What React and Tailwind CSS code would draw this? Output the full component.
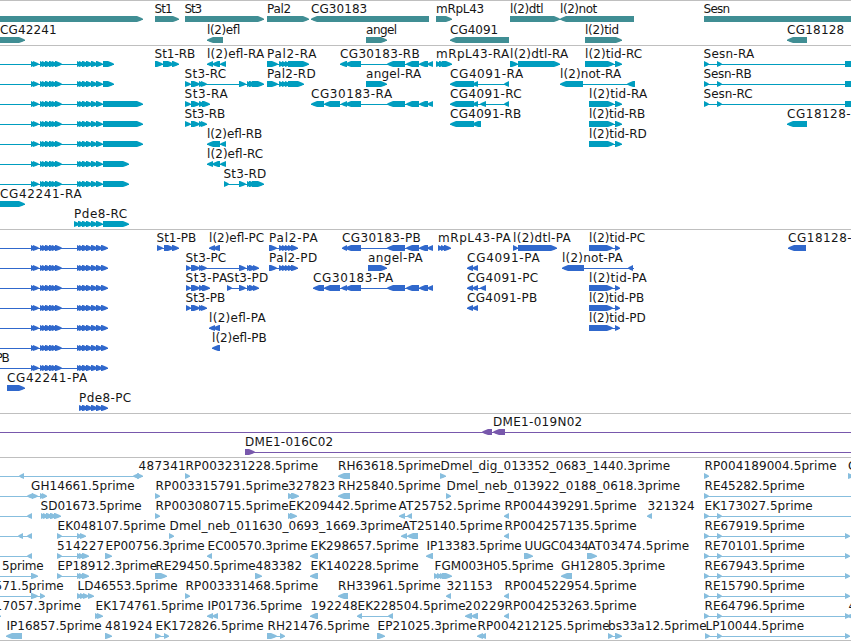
import React from "react";

/*
 * A feature is [row, label, labelStart, labelEnd, exons, lineStart?, lineEnd?].
 * Exons are written as "<a,b" or ">a,b", the sign giving the strand.
 */
const cluster = ">31,36 >33,39 >40,45 >42,48 >45,52 >49,56 >52,58 >55,62";
const pde = ">77,82 >79,85 >82,89 >86,93 >91,98 >96,103";
const pdeLong = (end) => `${cluster} ${pde} ${end > 110 ? ">103" : ">101"},${end}`;

const genes = [
  [0, "", 0, 0, ">-20,143"],
  [0, "St1", 155, 172, ">155,179"],
  [0, "St3", 185, 201.5, ">185,264"],
  [0, "Pal2", 267.5, 290.5, ">267,309"],
  [0, "CG30183", 311.5, 366.5, "<311,429"],
  [0, "mRpL43", 436.5, 483.5, ">436,452"],
  [0, "l(2)dtl", 510.5, 543, ">510,560"],
  [0, "l(2)not", 560.5, 596.5, "<560,634"],
  [0, "Sesn", 704, 729.5, ">704,880"],
  [1, "CG42241", 0.5, 56, ">-20,25"],
  [1, "l(2)efl", 207.5, 239.5, "<207,223"],
  [1, "angel", 366.5, 396.5, ">366,387"],
  [1, "CG4091", 450.5, 497.5, "<450,509"],
  [1, "l(2)tid", 585.5, 618.5, ">585,622"],
  [1, "CG18128", 787.5, 843.5, "<787,807"],
];

const cg30183Tail = "<387,405 <406,419 <419,428 <427,433";

const transcripts = [
  ...[114, 114, 143, 143, 143, 129, 129].map((end, i) => [i, "", 0, 0, pdeLong(end), 0]),
  [0, "St1-RB", 155, 194.5, ">155,163 >163,174 >172,179"],
  [0, "l(2)efl-RA", 207.5, 263.5, "<207,213 <212,220 <220,226"],
  [0, "Pal2-RA", 267.5, 315.7, ">267,278 >279,285 >282,288 >285,291 >288,309"],
  [0, "CG30183-RB", 340.5, 419, `<340,347 <345,361 ${cg30183Tail}`],
  [0, "mRpL43-RA", 436.5, 508.5, ">436,442 >439,446 >442,452"],
  [0, "l(2)dtl-RA", 510.5, 567.5, ">510,518 >518,560"],
  [0, "l(2)tid-RC", 585.5, 641.5, ">585,614 >615,622"],
  [0, "Sesn-RA", 704, 753.5, ">704,709 >717,722 >845,880"],
  [1, "St3-RC", 185, 225.5, ">185,191 >191,200 >199,204 >201,207 >239,246 >247,252 >249,256 >252,264"],
  [1, "Pal2-RD", 267.5, 315, ">267,278 >279,285 >282,288 >285,291 >288,304"],
  [1, "angel-RA", 366.5, 420.5, ">366,387"],
  [1, "CG4091-RA", 450.5, 522.5, "<450,474 <472,478 <504,509"],
  [1, "l(2)not-RA", 560.5, 620.5, "<560,583 <627,635"],
  [1, "Sesn-RB", 704, 751, ">704,709 >717,722 >845,880"],
  [2, "St3-RA", 185, 227, ">185,191 >191,200 >199,205 >202,210"],
  [2, "CG30183-RA", 311.5, 391.5, `<311,324 <324,340 <341,347 <345,361 ${cg30183Tail}`],
  [2, "CG4091-RC", 450.5, 521, "<450,474 <472,478 <480,486 <504,509"],
  [2, "l(2)tid-RA", 589.5, 646.5, ">589,614 >615,622"],
  [2, "Sesn-RC", 704, 752, ">704,709 >717,722 >845,880"],
  [3, "St3-RB", 185, 224.5, ">185,191 >191,200 >199,204 >201,207"],
  [3, "CG4091-RB", 450.5, 520.5, "<450,474 <472,481"],
  [3, "l(2)tid-RB", 589.5, 644.5, ">589,614 >615,622"],
  [3, "CG18128-", 787.5, 850, "<787,807"],
  [4, "l(2)efl-RB", 207.5, 261.5, "<207,220 <220,226"],
  [4, "l(2)tid-RD", 589.5, 646, ">589,614 >615,622"],
  [5, "l(2)efl-RC", 207.5, 262.5, "<207,213 <212,220 <220,226"],
  [6, "St3-RD", 224, 265.5, ">224,229 >239,246 >247,252 >249,256 >252,264"],
  [7, "CG42241-RA", 0.5, 81, ">-20,25"],
  [8, "Pde8-RC", 74.5, 126.5, ">74,80 >78,85 >82,89 >86,93 >91,98 >96,103 >103,129"],
];

const proteins = [
  ...[0, 1, 2, 3, 4, 5, 6].map((i) => [i, "", 0, 0, pdeLong(108), 0]),
  [0, "St1-PB", 157, 195.5, ">157,163 >164,174 >172,179"],
  [0, "l(2)efl-PC", 209.5, 263.5, "<209,215 <213,220"],
  [0, "Pal2-PA", 269.5, 317, ">269,277 >279,285 >282,288 >285,291 >288,294 >291,298"],
  [0, "CG30183-PB", 342.5, 420, `<342,347 <345,361 ${cg30183Tail}`],
  [0, "mRpL43-PA", 438.5, 510, ">438,443 >441,447 >444,451"],
  [0, "l(2)dtl-PA", 513.5, 570, ">513,518 >518,557"],
  [0, "l(2)tid-PC", 589.5, 644.5, ">589,613 >615,620"],
  [0, "CG18128-", 788.5, 851, "<788,806"],
  [1, "St3-PC", 186, 225.5, ">186,191 >191,200 >199,204 >201,207 >239,246 >247,252 >249,256 >253,259"],
  [1, "Pal2-PD", 269.5, 316.5, ">269,277 >279,285 >282,288 >285,291 >288,294 >291,298"],
  [1, "angel-PA", 368.5, 422, ">368,387"],
  [1, "CG4091-PA", 467.5, 539, "<467,473 <472,478"],
  [1, "l(2)not-PA", 562.5, 622, "<562,584 <628,633", 562, 634],
  [2, "St3-PA", 186, 226.5, ">186,191 >191,200 >199,205 >202,210"],
  [2, "St3-PD", 227, 267.5, ">227,232 >239,246 >247,252 >249,256 >253,259"],
  [2, "CG30183-PA", 313.5, 392.5, `<313,324 <324,340 <341,347 <345,361 ${cg30183Tail}`],
  [2, "CG4091-PC", 467.5, 537.5, "<467,473 <472,478 <480,486"],
  [2, "l(2)tid-PA", 589.5, 646, ">589,613 >615,620"],
  [3, "St3-PB", 186, 224.5, ">186,191 >191,200 >199,204 >201,207"],
  [3, "CG4091-PB", 467.5, 536.5, "<467,473 <472,478"],
  [3, "l(2)tid-PB", 589.5, 643.5, ">589,613 >615,620"],
  [4, "l(2)efl-PA", 209.5, 265, "<209,215 <213,220"],
  [4, "l(2)tid-PD", 589.5, 645, ">589,613 >615,620"],
  [5, "l(2)efl-PB", 212.5, 266, "<212,220"],
  [6, "PB", -4, 9, ""],
  [7, "CG42241-PA", 7.5, 86.5, ">7,25"],
  [8, "Pde8-PC", 79.5, 130.5, ">79,85 >82,89 >86,93 >91,98 >96,103 >101,108"],
];

const clones = [
  [0, "DME1-019N02", 493.5, 581.5, "<482,492 <493,505", 0, 851],
  [1, "DME1-016C02", 245.5, 332.5, ">245,255", 245, 851],
];

const ests = [
  [0, "", 0, 0, "<19,24 <133,139 >137,143", 0],
  [0, "487341", 139, 185, ""],
  [0, "RP003231228.5prime", 186, 317.5, ">185,190"],
  [0, "RH63618.5prime", 338.5, 440, "<338,350"],
  [0, "Dmel_dig_013352_0683_1440.3prime", 441, 669.5, ">440,446"],
  [0, "RP004189004.5prime", 705, 836, ">704,709"],
  [0, "C", 848.5, 855.5, ">848,854"],
  [1, "", 0, 0, "<27,33 >32,38 >40,45 >42,47", 0],
  [1, "GH14661.5prime", 31.5, 134, ""],
  [1, "RP003315791.5prime", 156, 288, ">155,160"],
  [1, "327823", 288.5, 334.5, ">288,294 >291,299"],
  [1, "RH25840.5prime", 338.5, 440, "<338,350"],
  [1, "Dmel_neb_013922_0188_0618.3prime", 447, 679.5, ">446,451"],
  [1, "RE45282.5prime", 705, 804, ">704,709", 704, 851],
  [2, "", 0, 0, "<27,32", 0],
  [2, "SD01673.5prime", 41, 141, ">41,46 >43,49 >46,53 >50,57 >54,61"],
  [2, "RP003080715.5prime", 156, 288, ">155,160"],
  [2, "EK209442.5prime", 289, 396, ">288,293 >290,297"],
  [2, "AT25752.5prime", 399, 500, "<399,405 <407,412"],
  [2, "RP004439291.5prime", 505, 636, "<504,509"],
  [2, "321324", 648, 694, "<647,652"],
  [2, "EK173027.5prime", 705, 812, ">704,709 >717,722", 704, 851],
  [3, "", 0, 0, "<18,23 <27,32", 0],
  [3, "EK048107.5prime", 58, 165, ">57,62 >77,82 >80,86"],
  [3, "Dmel_neb_011630_0693_1669.3prime", 170, 402, ">169,174"],
  [3, "AT25140.5prime", 402.5, 502, "<401,407 <407,418"],
  [3, "RP004257135.5prime", 505, 636, "<504,509"],
  [3, "RE67919.5prime", 705, 804, ">704,709 >717,722 >845,850"],
  [4, "", 0, 0, "<27,32", 0],
  [4, "514227", 57.5, 103.5, ">57,62 >77,82 >79,85 >82,89"],
  [4, "EP00756.3prime", 106, 204, ">105,112"],
  [4, "EC00570.3prime", 208, 307, "<207,212"],
  [4, "EK298657.5prime", 311, 418, "<310,318"],
  [4, "IP13383.5prime", 427, 521, "<426,433"],
  [4, "UUGC0434", 525, 588, ">524,533"],
  [4, "AT03474.5prime", 588, 688.5, ">587,597"],
  [4, "RE70101.5prime", 705, 804, ">704,709 >717,722 >845,850"],
  [5, "5prime", 2.5, 43, ">31,38", 0],
  [5, "EP18912.3prime", 58, 156.5, ">57,62 >77,82 >79,85 >82,89"],
  [5, "RE29450.5prime", 156, 255, ">155,167"],
  [5, "483382", 256, 301.5, ">255,262"],
  [5, "EK140228.5prime", 311, 418, "<310,318"],
  [5, "FGM003H05.5prime", 435, 553, ">434,439 >437,443 >440,446 >442,452"],
  [5, "GH12805.3prime", 561.5, 664.5, "<561,572"],
  [5, "RE67943.5prime", 705, 804, ">704,709 >717,722 >845,850"],
  [6, "571.5prime", -5, 63, ">31,38 >40,45", 0],
  [6, "LD46553.5prime", 78, 177, ">77,82 >80,86 >83,89 >88,94"],
  [6, "RP003331468.5prime", 186, 317.5, ">185,190"],
  [6, "RH33961.5prime", 338.5, 440, "<338,348"],
  [6, "321153", 447, 492, "<446,451"],
  [6, "RP004522954.5prime", 505, 636, "<504,509"],
  [6, "RE15790.5prime", 705, 804, ">704,709 >717,722 >845,850"],
  [7, "17057.3prime", -5, 80.5, ">-4,1"],
  [7, "EK174761.5prime", 96, 203, ">95,100 >97,103"],
  [7, "IP01736.5prime", 208, 301.5, "<207,213 <212,218"],
  [7, "192248", 311, 357, "<310,318"],
  [7, "EK228504.5prime", 358, 465, "<357,362 <388,393"],
  [7, "20229", 465.5, 504, "<465,472 <471,478"],
  [7, "RP004253263.5prime", 505, 636, "<504,509"],
  [7, "RE64796.5prime", 705, 804, ">704,709 >717,722 >845,850"],
  [7, "4", 849, 856, "<847,860"],
  [8, "IP16857.5prime", 7, 101, "<6,22"],
  [8, "481924", 105.5, 152, ">105,112"],
  [8, "EK172826.5prime", 156, 263, ">155,161 >164,169"],
  [8, "RH21476.5prime", 268, 369, ">267,277 >280,285"],
  [8, "EP21025.3prime", 378, 476, ">377,385"],
  [8, "RP004212125.5prime", 478, 609, "<477,483 <480,486"],
  [8, "bs33a12.5prime", 608.5, 706, ">608,613 >615,622"],
  [8, "LP10044.5prime", 706, 803.5, ">705,710 >717,722 >845,850"],
];

// Body with a slightly rounded arrow head on the 5' or 3' side.
function exonPath({ left, a, b }, top) {
  const head = Math.min(b - a, 6);
  const tip = left ? a : b;
  const tail = left ? b : a;
  const s = left ? 1 : -1;
  const neck = tip + s * head;
  const shoulder = tip + s * head * 0.4;
  return `M${tail} ${top}H${neck}L${shoulder} ${top + 1.6}L${tip} ${top + 2.8}V${top + 3.6}L${shoulder} ${top + 4.7}L${neck} ${top + 6}H${tail}Z`;
}

function Feature({ data, baseline }) {
  const [, label, start, end, source, lineStart, lineEnd] = data;
  const exons = source
    ? source.split(" ").map((part) => {
        const [a, b] = part.slice(1).split(",").map(Number);
        return { left: part[0] === "<", a, b };
      })
    : [];
  const top = baseline + 3;
  const from = lineStart ?? exons[0]?.a;
  const to = lineEnd ?? exons[exons.length - 1]?.b;
  return (
    <g>
      {exons.length > 0 && <rect x={from} y={top + 3} width={to - from} height={1} />}
      {exons.map((exon, i) => (
        <path key={i} d={exonPath(exon, top)} />
      ))}
      {label && (
        <text
          x={start - 0.4}
          y={baseline}
          textLength={end - start + 1.1}
          className="fill-[#161616] font-['DejaVu_Sans',sans-serif] text-[12px]"
        >
          {label}
        </text>
      )}
    </g>
  );
}

function Track({ features, first, step = 20, height, className }) {
  return (
    <section className="border-t border-[#bfbfbf]">
      <svg width="851" height={height} className={`block overflow-hidden ${className}`}>
        {features.map((data, i) => (
          <Feature key={i} data={data} baseline={first + data[0] * step} />
        ))}
      </svg>
    </section>
  );
}

export default function App() {
  return (
    <main className="flex w-[851px] flex-col overflow-hidden border-b border-[#bfbfbf] bg-white">
      <Track features={genes} first={12} step={21} height={44} className="fill-[#408e94]" />
      <Track features={transcripts} first={12} height={183} className="fill-[#009dbf]" />
      <Track features={proteins} first={12} height={183} className="fill-[#3068cc]" />
      <Track features={clones} first={12} height={43} className="fill-[#7858ac]" />
      <Track features={ests} first={12} height={182} className="fill-[#87bede]" />
    </main>
  );
}
